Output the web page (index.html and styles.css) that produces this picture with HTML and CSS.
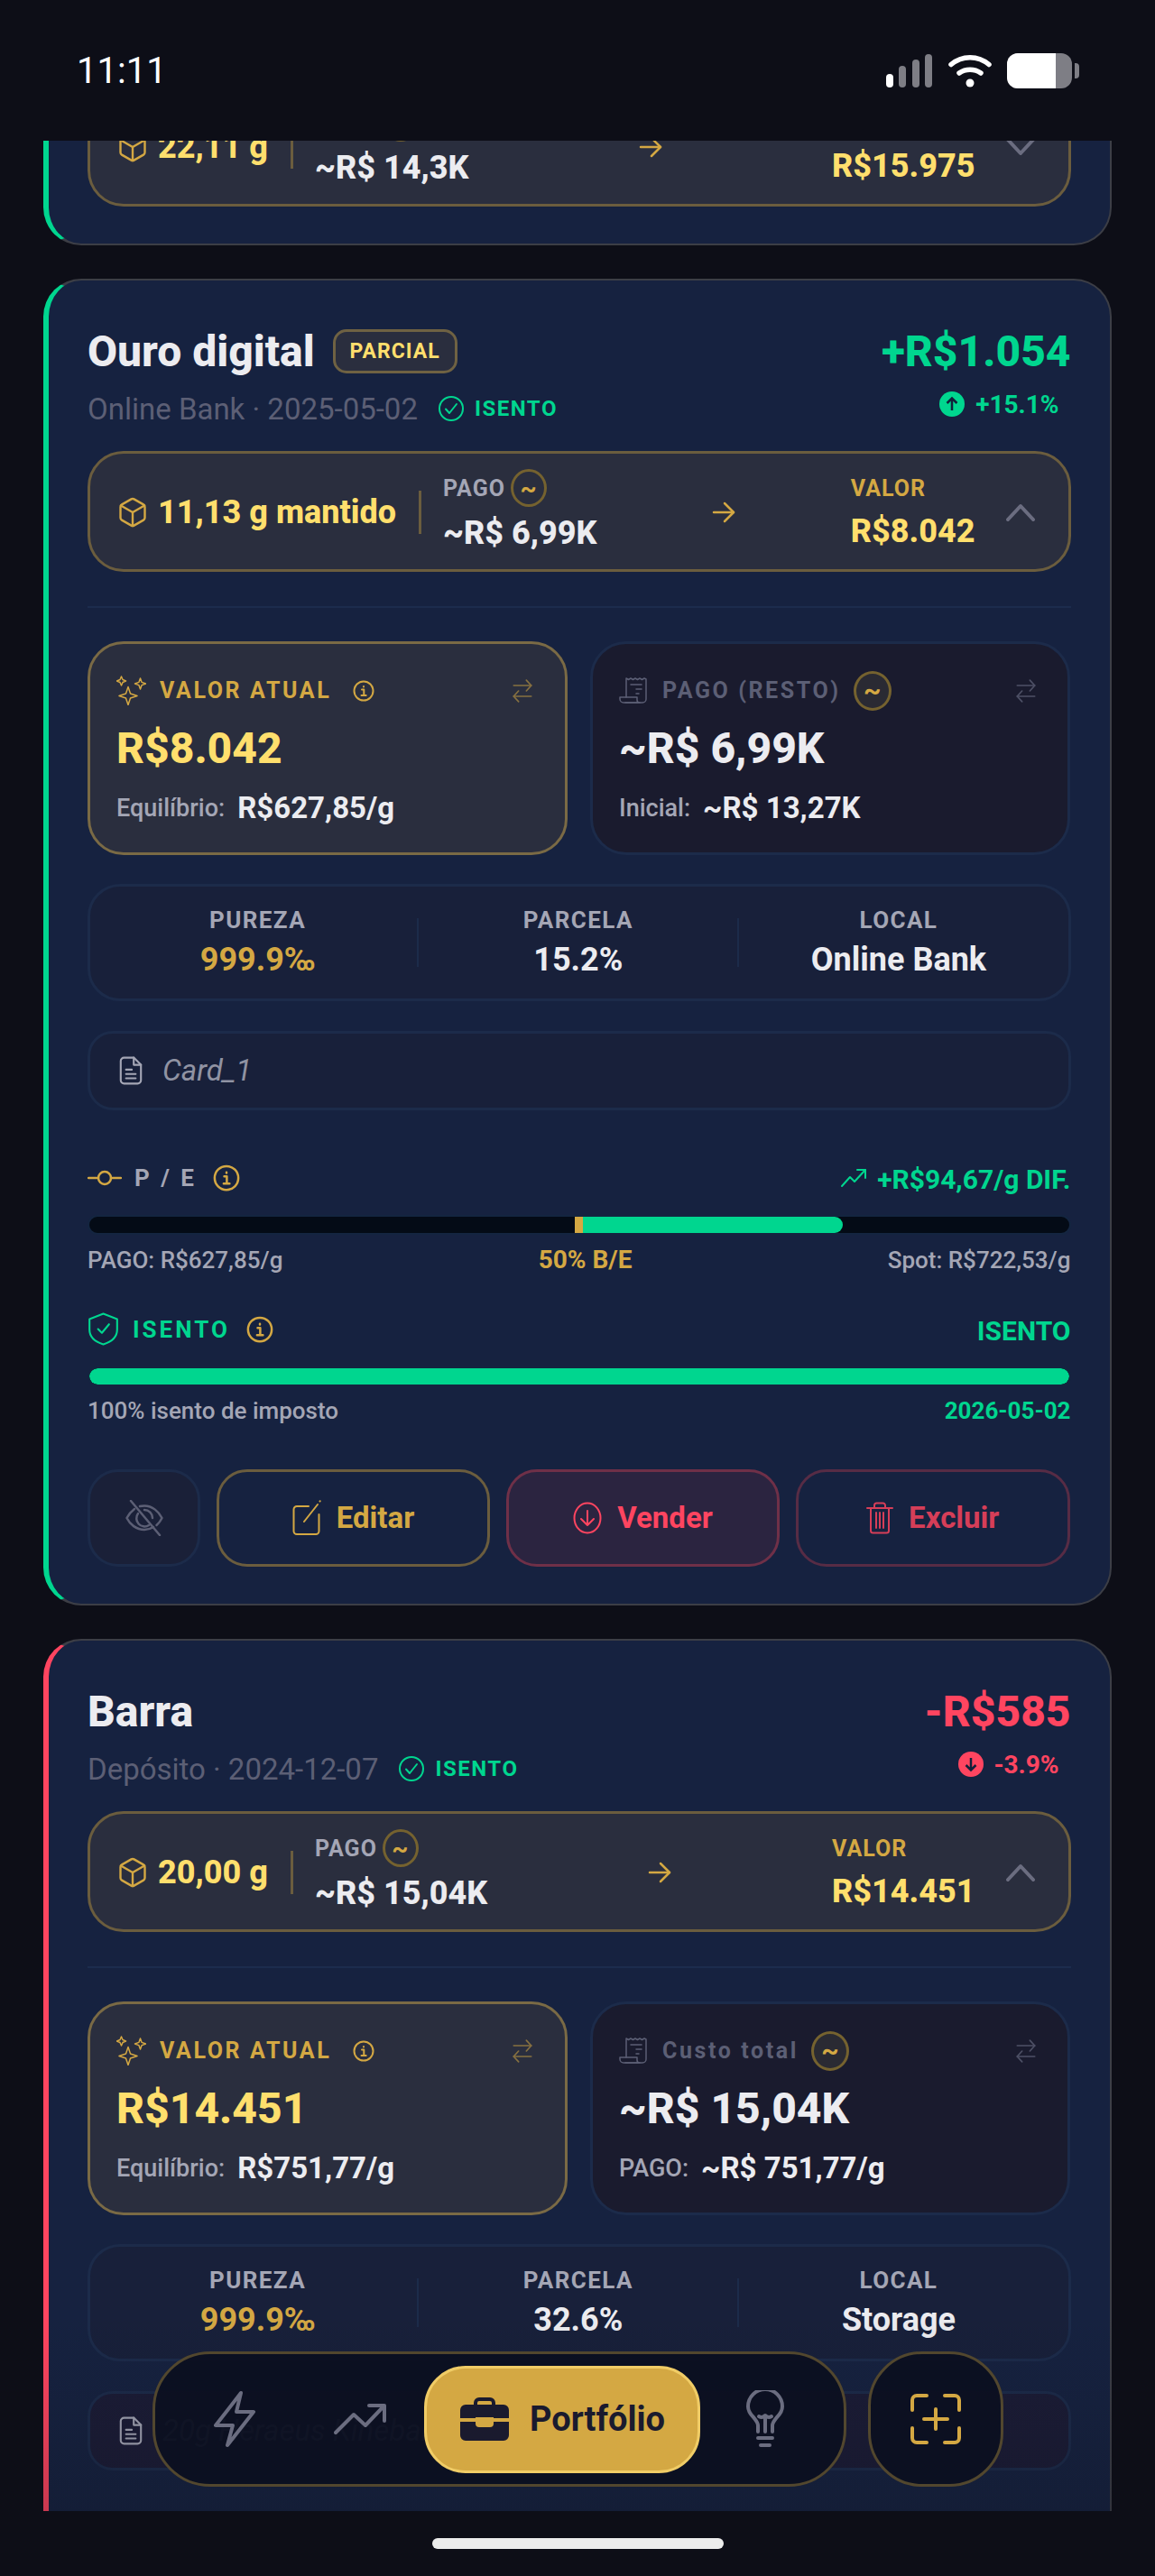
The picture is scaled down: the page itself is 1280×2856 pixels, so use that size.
FILE: index.html
```html
<!DOCTYPE html>
<html lang="pt-BR">
<head>
    <meta charset="UTF-8">
    <meta name="viewport" content="width=device-width, initial-scale=1.0">
    <title>Portfólio</title>
    <link rel="stylesheet" href="styles.css">
</head>
<body>
    <svg class="sprite" xmlns="http://www.w3.org/2000/svg">
        <symbol id="i-box" viewBox="0 0 24 24"><path d="M21 8a2 2 0 0 0-1-1.73l-7-4a2 2 0 0 0-2 0l-7 4A2 2 0 0 0 3 8v8a2 2 0 0 0 1 1.73l7 4a2 2 0 0 0 2 0l7-4A2 2 0 0 0 21 16Z"/><path d="m3.3 7 8.7 5 8.7-5"/><path d="M12 22V12"/></symbol>
        <symbol id="i-arrow" viewBox="0 0 26 24"><path d="M2 12h22"/><path d="m14 2 10 10-10 10"/></symbol>
        <symbol id="i-chev-up" viewBox="0 0 32 20"><path d="M2 18 16 3l14 15"/></symbol>
        <symbol id="i-chev-down" viewBox="0 0 32 20"><path d="M2 2l14 15L30 2"/></symbol>
        <symbol id="i-check" viewBox="0 0 30 30"><circle cx="15" cy="15" r="13"/><path d="m9 15.500 4 4.500 8-10"/></symbol>
        <symbol id="i-spark" viewBox="0 0 33 33"><path d="M13 12.500l2.500 7.500 7.500 2.500-7.500 2.500-2.500 7.500-2.500-7.500-7.500-2.500 7.500-2.500Z"/><path d="M5.500 1l1.500 3.500 3.500 1.500-3.500 1.500-1.500 3.500-1.500-3.500L.5 6l3.500-1.500Z"/><path d="M26.500 3l1.600 4.400 4.400 1.600-4.400 1.600-1.600 4.400-1.600-4.400-4.400-1.600 4.400-1.600Z"/></symbol>
        <symbol id="i-info" viewBox="0 0 24 24"><circle cx="12" cy="12" r="10.500"/><path d="M10 10.500h2.300v6.300M9.500 17h5.200M12 7v.6"/></symbol>
        <symbol id="i-swap" viewBox="0 0 24 24"><path d="m16 1 5 5.500-5 5.500"/><path d="M21 6.500H3"/><path d="m8 23-5-5.500L8 12"/><path d="M3 17.500h18"/></symbol>
        <symbol id="i-receipt" viewBox="0 0 31 31"><path d="M8 23V2l2.500 1.500L13 2l2.500 1.500L18 2l2.500 1.500L23 2l2.500 1.500L28 2l2 1v22a4 4 0 0 1-4 4H7"/><path d="M1 23h19v3a3 3 0 0 0 3 3H5a4 4 0 0 1-4-4Z"/><path d="M13 9h12M19 14h6M19 19h3"/></symbol>
        <symbol id="i-file" viewBox="0 0 24 30"><path d="M15 1.500H5a3.500 3.500 0 0 0-3.500 3.500v20A3.500 3.500 0 0 0 5 28.500h14a3.500 3.500 0 0 0 3.500-3.500V9Z"/><path d="M15 1.500V9h7.500"/><path d="M7 14h6M7 18.500h10M7 23h10"/></symbol>
        <symbol id="i-commit" viewBox="0 0 38 24"><circle cx="19" cy="12" r="7"/><path d="M1 12h11M26 12h11"/></symbol>
        <symbol id="i-trend" viewBox="0 0 30 24"><path d="m2 21 9-10 5 5L28 3"/><path d="M19 3h9v9"/></symbol>
        <symbol id="i-shield" viewBox="0 0 35 35"><path d="M17.500 1.500 32 7v11c0 8-6 13-14.500 15.500C9 31 3 26 3 18V7Z"/><path d="m12 17.500 4 4 7.500-9"/></symbol>
        <symbol id="i-eye-off" viewBox="0 0 42 40"><path d="M10 10C6 13 3 17 1.500 20 5 27 12 33 21 33c4 0 7-1 10-3"/><path d="M16 7c1.500-.5 3-.5 5-.5 9 0 16 6.500 19.500 13.500-1.500 3-3.500 6-6 8"/><path d="M14 15a9 9 0 0 0 12 13"/><path d="M21 11a9 9 0 0 1 9 9"/><path d="M6 1l32 38"/></symbol>
        <symbol id="i-edit" viewBox="0 0 32 40"><path d="M18 7H5a3.500 3.500 0 0 0-3.500 3.500v24A3.500 3.500 0 0 0 5 38h21a3.500 3.500 0 0 0 3.500-3.500V16"/><path d="M13 24 28 5M30.500 1.500l.2-.2"/></symbol>
        <symbol id="i-down" viewBox="0 0 32 36"><ellipse cx="16" cy="18" rx="14.500" ry="16.500"/><path d="M16 10v16M9 19l7 7 7-7"/></symbol>
        <symbol id="i-trash" viewBox="0 0 30 36"><path d="M1 7h28"/><path d="M9 6V4a2.500 2.500 0 0 1 2.500-2.500h7A2.500 2.500 0 0 1 21 4v2"/><path d="M5 7v25a2.500 2.500 0 0 0 2.500 2.500h15A2.500 2.500 0 0 0 25 32V7"/><path d="M11 12v17M15 12v17M19 12v17"/></symbol>
        <symbol id="i-bolt" viewBox="0 0 46 64"><path d="M30 3 2 39h19l-6 22 29-37H25Z"/></symbol>
        <symbol id="i-up-trend" viewBox="0 0 58 36"><path d="m2 33 20-20 13 12L55 4"/><path d="M39 3h17v17"/></symbol>
        <symbol id="i-bulb" viewBox="0 0 42 64"><path d="M13 46V39c0-3-2-5-5-9-3-3-6-7-6-12a19 19 0 0 1 38 0c0 5-3 9-6 12-3 4-5 6-5 9v7"/><path d="M21 46V30M14 29c3 2 5 1 7-1 2 2 4 3 7 1"/><path d="M13 53h16M16 61h10"/></symbol>
        <symbol id="i-scan" viewBox="0 0 56 56"><path d="M2 18V7a5 5 0 0 1 5-5h11"/><path d="M38 2h11a5 5 0 0 1 5 5v11"/><path d="M54 38v11a5 5 0 0 1-5 5H38"/><path d="M18 54H7a5 5 0 0 1-5-5V38"/><path d="M28 17v22M15 28h26"/></symbol>
    </svg>

    <div class="screen">
        <div class="status-bar">
            <span class="clock">11:11</span>
            <div class="status-icons">
                <svg width="52" height="37" viewBox="0 0 52 37">
                    <rect x="0" y="22" width="8" height="15" rx="4" fill="#fff"/>
                    <rect x="14" y="13" width="8" height="24" rx="4" fill="#7e7e85"/>
                    <rect x="29" y="6" width="8" height="31" rx="4" fill="#7e7e85"/>
                    <rect x="43" y="0" width="8" height="37" rx="4" fill="#7e7e85"/>
                </svg>
                <svg width="48" height="37" viewBox="0 0 48 37" fill="none" stroke="#fff" stroke-width="5.500" stroke-linecap="round">
                    <path d="M3 11.500C15 1 33 1 45 11.500"/>
                    <path d="M12 21c7-5 17-5 24 0"/>
                    <circle cx="24" cy="32" r="4.500" fill="#fff" stroke="none"/>
                </svg>
                <svg width="80" height="39" viewBox="0 0 80 39">
                    <rect x="0" y="0" width="72" height="39" rx="12" fill="#7e7e85"/>
                    <path d="M12 0h42v39H12A12 12 0 0 1 0 27V12A12 12 0 0 1 12 0Z" fill="#fff"/>
                    <path d="M75 11h1a4 4 0 0 1 4 4v9a4 4 0 0 1-4 4h-1Z" fill="#7e7e85"/>
                </svg>
            </div>
        </div>

        <div class="feed">
            <div class="card card-green card-cut">
                <div class="pill">
                    <svg class="ic ic-box"><use href="#i-box"/></svg>
                    <span class="pill-qty">22,11 g</span>
                    <span class="pill-sep"></span>
                    <div class="pill-col">
                        <div class="pill-label"><span>PAGO</span><span class="tilde tilde-sm">~</span></div>
                        <div class="pill-val">~R$ 14,3K</div>
                    </div>
                    <div class="pill-arrow"><svg class="ic ic-arrow"><use href="#i-arrow"/></svg></div>
                    <div class="pill-col">
                        <div class="pill-label pill-label-gold">VALOR</div>
                        <div class="pill-val pill-val-yellow">R$15.975</div>
                    </div>
                    <svg class="ic ic-chev"><use href="#i-chev-down"/></svg>
                </div>
            </div>

            <div class="card card-green">
                <div class="card-head">
                    <div class="title-row">
                        <h2>Ouro digital</h2>
                        <span class="tag">PARCIAL</span>
                    </div>
                    <div class="amount green">+R$1.054</div>
                    <div class="sub-row">
                        <span class="sub-text">Online Bank · 2025-05-02</span>
                        <svg class="ic ic-check"><use href="#i-check"/></svg>
                        <span class="sub-badge">ISENTO</span>
                    </div>
                    <div class="pct green">
                        <svg class="pct-dot" viewBox="0 0 28 28"><circle cx="14" cy="14" r="14" fill="#00d68f"/><path d="M14 21V8M8.500 13 14 7.500l5.500 5.500" fill="none" stroke="#10203a" stroke-width="2.500"/></svg>
                        <span>+15.1%</span>
                    </div>
                </div>

                <div class="pill">
                    <svg class="ic ic-box"><use href="#i-box"/></svg>
                    <span class="pill-qty">11,13 g mantido</span>
                    <span class="pill-sep"></span>
                    <div class="pill-col">
                        <div class="pill-label"><span>PAGO</span><span class="tilde tilde-sm">~</span></div>
                        <div class="pill-val">~R$ 6,99K</div>
                    </div>
                    <div class="pill-arrow"><svg class="ic ic-arrow"><use href="#i-arrow"/></svg></div>
                    <div class="pill-col">
                        <div class="pill-label pill-label-gold">VALOR</div>
                        <div class="pill-val pill-val-yellow">R$8.042</div>
                    </div>
                    <svg class="ic ic-chev"><use href="#i-chev-up"/></svg>
                </div>

                <div class="divider"></div>

                <div class="value-grid">
                    <div class="value-card value-on">
                        <div class="value-label">
                            <svg class="ic ic-spark"><use href="#i-spark"/></svg>
                            <span>VALOR ATUAL</span>
                            <svg class="ic ic-info-sm"><use href="#i-info"/></svg>
                            <svg class="ic ic-swap"><use href="#i-swap"/></svg>
                        </div>
                        <div class="value-main yellow">R$8.042</div>
                        <div class="value-sub"><span>Equilíbrio:</span><b>R$627,85/g</b></div>
                    </div>
                    <div class="value-card value-off">
                        <div class="value-label">
                            <svg class="ic ic-receipt"><use href="#i-receipt"/></svg>
                            <span>PAGO (RESTO)</span>
                            <span class="tilde">~</span>
                            <svg class="ic ic-swap"><use href="#i-swap"/></svg>
                        </div>
                        <div class="value-main">~R$ 6,99K</div>
                        <div class="value-sub"><span>Inicial:</span><b>~R$ 13,27K</b></div>
                    </div>
                </div>

                <div class="stats">
                    <div class="stat"><span class="stat-label">PUREZA</span><span class="stat-val stat-gold">999.9‰</span></div>
                    <span class="stat-sep"></span>
                    <div class="stat"><span class="stat-label">PARCELA</span><span class="stat-val">15.2%</span></div>
                    <span class="stat-sep"></span>
                    <div class="stat"><span class="stat-label">LOCAL</span><span class="stat-val">Online Bank</span></div>
                </div>

                <div class="note">
                    <svg class="ic ic-file"><use href="#i-file"/></svg>
                    <span>Card_1</span>
                </div>

                <div class="meter-head">
                    <svg class="ic ic-commit"><use href="#i-commit"/></svg>
                    <span class="meter-title">P / E</span>
                    <svg class="ic ic-info"><use href="#i-info"/></svg>
                    <svg class="ic ic-trend"><use href="#i-trend"/></svg>
                    <span class="meter-right">+R$94,67/g DIF.</span>
                </div>
                <div class="bar">
                    <span class="bar-spacer"></span>
                    <span class="bar-mark"></span>
                    <span class="bar-fill" style="width: 26.5%"></span>
                </div>
                <div class="bar-labels">
                    <span>PAGO: R$627,85/g</span>
                    <b class="gold">50% B/E</b>
                    <span>Spot: R$722,53/g</span>
                </div>

                <div class="meter-head meter-tax">
                    <svg class="ic ic-shield"><use href="#i-shield"/></svg>
                    <span class="meter-title meter-title-green">ISENTO</span>
                    <svg class="ic ic-info"><use href="#i-info"/></svg>
                    <span class="meter-right meter-push">ISENTO</span>
                </div>
                <div class="bar bar-tax">
                    <span class="bar-fill" style="width: 100%"></span>
                </div>
                <div class="bar-labels bar-labels-tax">
                    <span>100% isento de imposto</span>
                    <b class="green">2026-05-02</b>
                </div>

                <div class="actions">
                    <button class="btn btn-eye"><svg class="ic ic-eye"><use href="#i-eye-off"/></svg></button>
                    <button class="btn btn-edit"><svg class="ic ic-edit"><use href="#i-edit"/></svg>Editar</button>
                    <button class="btn btn-sell"><svg class="ic ic-down"><use href="#i-down"/></svg>Vender</button>
                    <button class="btn btn-del"><svg class="ic ic-trash"><use href="#i-trash"/></svg>Excluir</button>
                </div>
            </div>

            <div class="card card-red">
                <div class="card-head">
                    <div class="title-row">
                        <h2>Barra</h2>
                    </div>
                    <div class="amount red">-R$585</div>
                    <div class="sub-row">
                        <span class="sub-text">Depósito · 2024-12-07</span>
                        <svg class="ic ic-check"><use href="#i-check"/></svg>
                        <span class="sub-badge">ISENTO</span>
                    </div>
                    <div class="pct red">
                        <svg class="pct-dot" viewBox="0 0 28 28"><circle cx="14" cy="14" r="14" fill="#ff4560"/><path d="M14 7v13M8.500 15 14 20.500l5.500-5.500" fill="none" stroke="#10203a" stroke-width="2.500"/></svg>
                        <span>-3.9%</span>
                    </div>
                </div>

                <div class="pill">
                    <svg class="ic ic-box"><use href="#i-box"/></svg>
                    <span class="pill-qty">20,00 g</span>
                    <span class="pill-sep"></span>
                    <div class="pill-col">
                        <div class="pill-label"><span>PAGO</span><span class="tilde tilde-sm">~</span></div>
                        <div class="pill-val">~R$ 15,04K</div>
                    </div>
                    <div class="pill-arrow"><svg class="ic ic-arrow"><use href="#i-arrow"/></svg></div>
                    <div class="pill-col">
                        <div class="pill-label pill-label-gold">VALOR</div>
                        <div class="pill-val pill-val-yellow">R$14.451</div>
                    </div>
                    <svg class="ic ic-chev"><use href="#i-chev-up"/></svg>
                </div>

                <div class="divider"></div>

                <div class="value-grid">
                    <div class="value-card value-on">
                        <div class="value-label">
                            <svg class="ic ic-spark"><use href="#i-spark"/></svg>
                            <span>VALOR ATUAL</span>
                            <svg class="ic ic-info-sm"><use href="#i-info"/></svg>
                            <svg class="ic ic-swap"><use href="#i-swap"/></svg>
                        </div>
                        <div class="value-main yellow">R$14.451</div>
                        <div class="value-sub"><span>Equilíbrio:</span><b>R$751,77/g</b></div>
                    </div>
                    <div class="value-card value-off">
                        <div class="value-label">
                            <svg class="ic ic-receipt"><use href="#i-receipt"/></svg>
                            <span>Custo total</span>
                            <span class="tilde">~</span>
                            <svg class="ic ic-swap"><use href="#i-swap"/></svg>
                        </div>
                        <div class="value-main">~R$ 15,04K</div>
                        <div class="value-sub"><span>PAGO:</span><b>~R$ 751,77/g</b></div>
                    </div>
                </div>

                <div class="stats">
                    <div class="stat"><span class="stat-label">PUREZA</span><span class="stat-val stat-gold">999.9‰</span></div>
                    <span class="stat-sep"></span>
                    <div class="stat"><span class="stat-label">PARCELA</span><span class="stat-val">32.6%</span></div>
                    <span class="stat-sep"></span>
                    <div class="stat"><span class="stat-label">LOCAL</span><span class="stat-val">Storage</span></div>
                </div>

                <div class="note note-red">
                    <svg class="ic ic-file"><use href="#i-file"/></svg>
                    <span>20g Heraeus Kinebar</span>
                </div>
            </div>
        </div>

        <div class="home-area"><span class="home-bar"></span></div>

        <div class="nav-wrap">
            <nav class="nav">
                <span class="nav-item"><svg class="ic ic-bolt"><use href="#i-bolt"/></svg></span>
                <span class="nav-item"><svg class="ic ic-uptrend"><use href="#i-up-trend"/></svg></span>
                <span class="nav-active">
                    <svg class="ic-case" viewBox="0 0 54 48">
                        <path d="M17 9V6a4 4 0 0 1 4-4h12a4 4 0 0 1 4 4v3" fill="none" stroke="#1a1a2e" stroke-width="4"/>
                        <path d="M6 8h42a6 6 0 0 1 6 6v9H37v-1H17v1H0v-9a6 6 0 0 1 6-6Z" fill="#1a1a2e"/>
                        <path d="M0 27h17v2a4 4 0 0 0 4 4h12a4 4 0 0 0 4-4v-2h17v15a6 6 0 0 1-6 6H6a6 6 0 0 1-6-6Z" fill="#1a1a2e"/>
                    </svg>
                    Portfólio
                </span>
                <span class="nav-item nav-item-last"><svg class="ic ic-bulb"><use href="#i-bulb"/></svg></span>
            </nav>
            <button class="fab"><svg class="ic ic-scan"><use href="#i-scan"/></svg></button>
        </div>
    </div>
</body>
</html>
```

FILE: styles.css
```css
* {
    box-sizing: border-box;
}

body {
    margin: 0;
    background-color: #0d0e17;
    font-family: Roboto, "Liberation Sans", sans-serif;
    color: #ececf0;
}

.sprite {
    display: none;
}

.screen {
    position: relative;
    width: 1280px;
    height: 2856px;
    display: flex;
    flex-direction: column;
    overflow: hidden;
}

.ic {
    fill: none;
    stroke: currentColor;
    stroke-width: 2;
    stroke-linecap: round;
    stroke-linejoin: round;
    flex-shrink: 0;
}

.green { color: #00d68f; }
.red { color: #ff4560; }
.gold { color: #d4a843; }
.yellow { color: #ffdf6d; }

/* status bar */
.status-bar {
    height: 156px;
    flex-shrink: 0;
    display: flex;
    align-items: center;
    justify-content: space-between;
    padding: 0 84px 0 85px;
    background-color: #0d0e17;
}

.clock {
    font-size: 40px;
    color: #fff;
}

.status-icons {
    display: flex;
    align-items: center;
    gap: 17px;
}

/* scrolled list */
.feed {
    position: relative;
    height: 2628px;
    flex-shrink: 0;
    padding: 0 48px;
    overflow: hidden;
}

.feed::after {
    content: "";
    position: absolute;
    left: 0;
    right: 0;
    bottom: 0;
    height: 220px;
    background: linear-gradient(to bottom, rgba(13, 14, 23, 0), rgba(13, 14, 23, 0.22));
}

.card {
    background-color: #162240;
    border: 2.5px solid #3c3e46;
    border-left-width: 6px;
    border-radius: 42px;
    padding: 52px 43.5px 41.5px 43px;
    margin-bottom: 37px;
}

.card-green { border-left-color: #00d68f; }

.card-red {
    border-left-color: #ff4560;
    padding-bottom: 200px;
}

.card-cut {
    margin-top: -100px;
    padding-top: 36.5px;
}

.card-head {
    display: grid;
    grid-template-columns: 1fr auto;
    grid-template-rows: 52px 40px;
    row-gap: 18px;
    margin-bottom: 26.5px;
}

.title-row {
    display: flex;
    align-items: center;
    gap: 20px;
}

h2 {
    margin: 0;
    font-size: 48px;
    font-weight: 800;
    color: #ececf0;
}

.tag {
    height: 49px;
    padding: 0 16px;
    display: flex;
    align-items: center;
    font-size: 23px;
    font-weight: 700;
    letter-spacing: 1px;
    color: #ffdf6d;
    background-color: #2a2e3e;
    border: 3px solid #6f6243;
    border-radius: 15px;
}

.amount {
    font-size: 48px;
    font-weight: 800;
    text-align: right;
    align-self: center;
}

.sub-row {
    display: flex;
    align-items: center;
}

.sub-text {
    font-size: 33px;
    color: #5c5f75;
}

.ic-check {
    width: 30px;
    height: 30px;
    margin-left: 22px;
    color: #00d68f;
}

.sub-badge {
    margin-left: 11px;
    font-size: 24px;
    font-weight: 700;
    letter-spacing: 1.5px;
    color: #00d68f;
}

.pct {
    display: flex;
    align-items: center;
    justify-content: flex-end;
    gap: 12px;
    padding-right: 13px;
    margin-top: -10px;
    font-size: 28px;
    font-weight: 700;
}

.pct-dot {
    width: 28px;
    height: 28px;
}

/* summary pill */
.pill {
    height: 134px;
    display: flex;
    align-items: center;
    padding: 3px 37px 0 29px;
    background-color: #2a2e3e;
    border: 3px solid #6b5d3e;
    border-radius: 40px;
}

.ic-box {
    width: 36px;
    height: 36px;
    color: #d4a843;
    stroke-width: 1.600;
}

.pill-qty {
    margin-left: 10px;
    font-size: 36px;
    font-weight: 800;
    color: #ffdf6d;
}

.pill-sep {
    width: 3px;
    height: 48px;
    margin: 0 24px 0 25px;
    background-color: #6b5d3e;
}

.pill-col {
    display: flex;
    flex-direction: column;
    gap: 7px;
    margin-top: -3px;
}

.pill-label {
    height: 42px;
    display: flex;
    align-items: center;
    gap: 6px;
    font-size: 25px;
    font-weight: 700;
    letter-spacing: 1px;
    color: #a4a6b5;
}

.pill-label-gold {
    height: 37px;
    color: #d4a843;
}

.pill-val {
    font-size: 36px;
    font-weight: 800;
    line-height: 44px;
    color: #ececf0;
}

.pill-val-yellow {
    color: #ffdf6d;
}

.pill-arrow {
    flex: 1;
    display: flex;
    justify-content: center;
    color: #d4a843;
}

.ic-arrow {
    width: 26px;
    height: 24px;
    stroke-width: 2.500;
}

.ic-chev {
    width: 32px;
    height: 20px;
    margin-left: 34px;
    color: #6b6d80;
    stroke-width: 4;
}

.tilde {
    width: 42px;
    height: 44px;
    display: flex;
    align-items: center;
    justify-content: center;
    font-size: 30px;
    font-weight: 700;
    color: #d4a843;
    background-color: #2a2a33;
    border: 3px solid #75622f;
    border-radius: 50%;
}

.tilde-sm {
    width: 40px;
    height: 42px;
    font-size: 28px;
    background-color: transparent;
}

.divider {
    height: 2px;
    margin-top: 38px;
    background-color: #1c2c4d;
}

/* value cards */
.value-grid {
    display: grid;
    grid-template-columns: 532px 531.5px;
    column-gap: 25px;
    margin-top: 37px;
}

.value-card {
    height: 237px;
    display: flex;
    flex-direction: column;
    padding: 33px 34px 0 29px;
    border-radius: 40px;
    border: 3px solid;
}

.value-on {
    background-color: #2a2e3e;
    border-color: #7a6a45;
    color: #d4a843;
}

.value-off {
    padding-right: 33px;
    background-color: #1a1b2e;
    border-color: #1c2b4a;
    color: #5c5f75;
}

.value-label {
    height: 38px;
    display: flex;
    align-items: center;
    font-size: 25px;
    font-weight: 700;
    letter-spacing: 2.6px;
}

.ic-spark {
    width: 33px;
    height: 33px;
    margin-right: 15px;
    stroke-width: 1.500;
}

.ic-receipt {
    width: 31px;
    height: 31px;
    margin-right: 17px;
    stroke-width: 1.500;
}

.value-label .tilde {
    margin-left: 14px;
    letter-spacing: 0;
}

.ic-info-sm {
    width: 24px;
    height: 24px;
    margin-left: 24px;
}

.ic-swap {
    width: 26px;
    height: 30px;
    margin-left: auto;
    opacity: 0.55;
    stroke-width: 1.500;
}

.value-off .ic-swap {
    opacity: 0.8;
}

.value-main {
    margin-top: 15px;
    height: 60px;
    display: flex;
    align-items: center;
    font-size: 48px;
    font-weight: 800;
    color: #ececf0;
}

.value-main.yellow {
    color: #ffdf6d;
}

.value-sub {
    margin-top: 16px;
    height: 40px;
    display: flex;
    align-items: center;
    gap: 14px;
    font-size: 27px;
    font-weight: 500;
    color: #a4a6b5;
}

.value-sub b {
    font-size: 33px;
    font-weight: 700;
    color: #ececf0;
}

/* stats row */
.stats {
    height: 130px;
    margin-top: 32px;
    display: flex;
    align-items: center;
    padding: 0 11px 0 9px;
    background-color: #18203a;
    border: 3px solid #1c2b4a;
    border-radius: 36px;
}

.stat {
    flex: 1;
    display: flex;
    flex-direction: column;
    align-items: center;
    gap: 5px;
}

.stat-label {
    height: 34px;
    display: flex;
    align-items: center;
    font-size: 26px;
    font-weight: 700;
    letter-spacing: 1.4px;
    color: #a4a6b5;
}

.stat-val {
    height: 44px;
    display: flex;
    align-items: center;
    font-size: 36px;
    font-weight: 700;
    color: #ececf0;
}

.stat-gold {
    color: #d4a843;
}

.stat-sep {
    width: 2px;
    height: 54px;
    background-color: #1c2b4a;
}

/* note */
.note {
    height: 88px;
    margin-top: 33px;
    display: flex;
    align-items: center;
    gap: 22px;
    padding: 0 32px;
    background-color: #18203a;
    border: 3px solid #1c2b4a;
    border-radius: 28px;
    font-size: 33px;
    font-style: italic;
    color: #9093a3;
}

.note-red {
    background-color: #1b1c36;
}

.ic-file {
    width: 26px;
    height: 32px;
    color: #a4a6b5;
    stroke-width: 2;
}

/* meters */
.meter-head {
    height: 32px;
    margin-top: 59px;
    display: flex;
    align-items: center;
}

.meter-tax {
    margin-top: 45px;
}

.ic-commit {
    width: 38px;
    height: 24px;
    color: #d4a843;
    stroke-width: 2.500;
}

.ic-shield {
    width: 37px;
    height: 37px;
    margin-left: -1px;
    color: #00d68f;
}

.meter-title {
    margin-left: 14px;
    font-size: 26px;
    font-weight: 700;
    letter-spacing: 3px;
    color: #a4a6b5;
}

.meter-title-green {
    color: #00d68f;
}

.ic-info {
    width: 30px;
    height: 30px;
    margin-left: 18px;
    color: #d4a843;
}

.ic-trend {
    width: 30px;
    height: 24px;
    margin-left: auto;
    color: #00d68f;
}

.meter-right {
    margin-top: 3px;
    margin-left: 11px;
    font-size: 30px;
    font-weight: 700;
    color: #00d68f;
}

.meter-push {
    margin-left: auto;
}

.bar {
    height: 22px;
    margin-top: 25px;
    display: flex;
    background-color: #040b16;
    border: 2px solid #142540;
    border-radius: 11px;
    overflow: hidden;
}

.bar-spacer {
    width: 538px;
}

.bar-mark {
    width: 9px;
    background-color: #d4a843;
}

.bar-fill {
    background-color: #00d68f;
    border-radius: 0 9px 9px 0;
}

.bar-tax .bar-fill {
    border-radius: 9px;
}

.bar-labels {
    height: 32px;
    margin-top: 12px;
    display: flex;
    align-items: center;
    justify-content: space-between;
    font-size: 26px;
    font-weight: 500;
    color: #a4a6b5;
}

.bar-labels b {
    font-weight: 700;
    font-size: 28px;
}

.bar-labels-tax {
    margin-top: 11px;
}

.bar-labels-tax b {
    font-size: 26px;
}

/* buttons */
.actions {
    margin-top: 49px;
    display: grid;
    grid-template-columns: 125px 303px 303px 303.5px;
    column-gap: 18px;
}

.btn {
    height: 108px;
    display: flex;
    align-items: center;
    justify-content: center;
    gap: 17px;
    background-color: transparent;
    border: 3px solid;
    border-radius: 34px;
    font-family: Roboto, "Liberation Sans", sans-serif;
    font-size: 33px;
    font-weight: 700;
}

.btn-eye {
    background-color: #1a2038;
    border-color: #1c2b4a;
    color: #5c5f75;
}

.btn-edit {
    border-color: #6b5d3e;
    color: #d4a843;
}

.btn-sell {
    background-color: #2b2440;
    border-color: #6f3048;
    color: #ff4560;
}

.btn-del {
    border-color: #572c45;
    color: #d63e58;
}

.ic-eye {
    width: 42px;
    height: 40px;
    stroke-width: 2.500;
}

.ic-edit {
    width: 32px;
    height: 40px;
}

.ic-down {
    width: 32px;
    height: 36px;
}

.ic-trash {
    width: 30px;
    height: 36px;
}

/* bottom */
.home-area {
    flex: 1;
    display: flex;
    justify-content: center;
    align-items: flex-start;
    padding-top: 30px;
    background-color: #0d0e17;
}

.home-bar {
    width: 323px;
    height: 12px;
    border-radius: 6px;
    background-color: #ececec;
}

.nav-wrap {
    position: absolute;
    left: 169px;
    top: 2607px;
    display: flex;
    gap: 24px;
}

.nav {
    width: 769px;
    height: 150px;
    display: flex;
    align-items: center;
    padding: 0 15px 0 18px;
    background-color: rgba(11, 16, 32, 0.96);
    border: 3px solid #52472e;
    border-radius: 64px;
}

.nav-item {
    width: 139px;
    display: flex;
    justify-content: center;
    color: #6b6d80;
}

.nav-item-last {
    width: 144px;
}

.nav-active {
    width: 306px;
    height: 119px;
    margin-left: 2px;
    display: flex;
    align-items: center;
    gap: 23px;
    padding-left: 37px;
    background-color: #d4a843;
    border: 3px solid #f0cc66;
    border-radius: 46px;
    font-size: 38px;
    font-weight: 700;
    color: #1a1a2e;
}

.ic-case {
    width: 54px;
    height: 48px;
}

.ic-bolt {
    width: 46px;
    height: 64px;
    stroke-width: 4;
}

.ic-uptrend {
    width: 58px;
    height: 36px;
    stroke-width: 4;
}

.ic-bulb {
    width: 42px;
    height: 64px;
    stroke-width: 4;
}

.fab {
    width: 150px;
    height: 150px;
    display: flex;
    align-items: center;
    justify-content: center;
    padding: 0;
    background-color: rgba(11, 16, 32, 0.96);
    border: 3px solid #52472e;
    border-radius: 60px;
    color: #d4a843;
}

.ic-scan {
    width: 56px;
    height: 56px;
    stroke-width: 4;
}
```
